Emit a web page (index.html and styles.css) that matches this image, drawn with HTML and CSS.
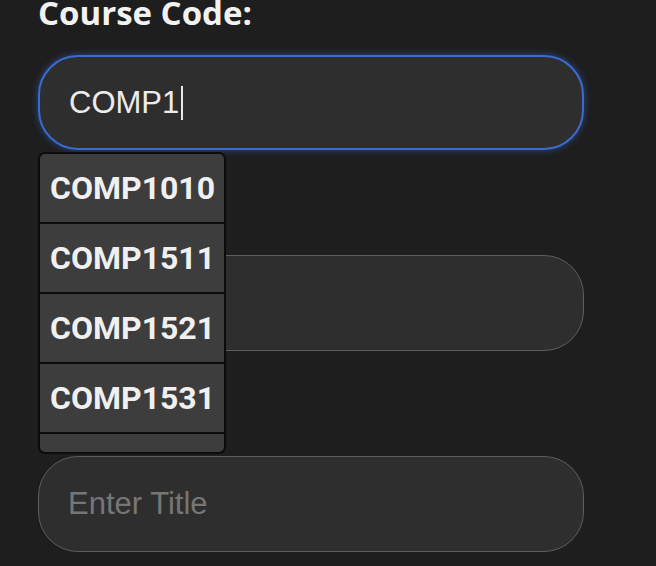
FILE: index.html
```html
<!DOCTYPE html>
<html>
<head>
<meta charset="utf-8">
<link rel="stylesheet" href="styles.css">
</head>
<body>
<div class="page">
  <div class="label">Course Code:</div>
  <div class="field focused"><span class="value">COMP1</span><span class="caret"></span></div>
  <div class="field second"></div>
  <div class="field third"><span class="placeholder">Enter Title</span></div>
  <ul class="dropdown">
    <li class="option">COMP1010</li>
    <li class="option">COMP1511</li>
    <li class="option">COMP1521</li>
    <li class="option">COMP1531</li>
    <li class="option partial"></li>
  </ul>
</div>
</body>
</html>
```
FILE: styles.css
```css
html, body {
  margin: 0;
  padding: 0;
  background: #1e1e1e;
  height: 100%;
  overflow: hidden;
}
.page {
  position: relative;
  display: flex;
  flex-direction: column;
  padding-left: 38px;
  width: 546px;
}
.label {
  font-family: "Open Sans", sans-serif;
  font-weight: bold;
  font-size: 33px;
  line-height: 26px;
  color: #f2f2f2;
  margin-bottom: 29px;
}
.field {
  box-sizing: border-box;
  height: 96px;
  border: 1.5px solid #5e5e5e;
  border-radius: 40px;
  background: #2e2e2e;
  display: flex;
  align-items: center;
  padding-left: 29px;
  font-family: "Liberation Sans", Arial, sans-serif;
  font-size: 31px;
}
.field.focused {
  height: 95px;
  border: 2px solid #3a6bd0;
  box-shadow: 0 0 7px rgba(60, 110, 220, 0.55);
}
.field.second {
  margin-top: 105px;
}
.field.third {
  margin-top: 105px;
}
.value {
  color: #ececec;
}
.caret {
  display: inline-block;
  width: 2px;
  height: 34px;
  background: #e8e8e8;
  margin-left: 2px;
}
.placeholder {
  color: #767676;
}
.dropdown {
  position: absolute;
  top: 152px;
  left: 38px;
  width: 188px;
  height: 302px;
  box-sizing: border-box;
  margin: 0;
  padding: 0;
  list-style: none;
  border: 2px solid #0c0c0c;
  border-radius: 7px;
  background: #3d3d3d;
  overflow: hidden;
}
.option {
  box-sizing: border-box;
  height: 70px;
  border-bottom: 2.5px solid #0c0c0c;
  display: flex;
  align-items: center;
  padding-left: 10px;
  font-family: Roboto, sans-serif;
  font-weight: bold;
  font-size: 32px;
  color: #f0f0f0;
}
.option.partial {
  border-bottom: none;
}
```
